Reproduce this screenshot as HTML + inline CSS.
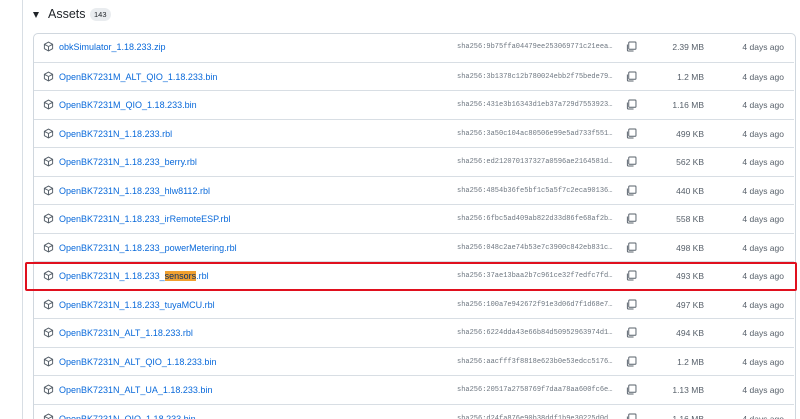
<!DOCTYPE html>
<html><head><meta charset="utf-8"><style>
html,body{margin:0;width:800px;height:419px;overflow:hidden}
body{background:#fff;font-family:"Liberation Sans",sans-serif;position:relative}
.vl{position:absolute;left:22px;top:0;width:1px;height:419px;background:#d8dee4}
.tri{position:absolute;left:33px;top:12px;width:0;height:0;border-left:3.5px solid transparent;border-right:3.5px solid transparent;border-top:6px solid #1f2328}
.ttl{position:absolute;left:48px;top:7px;font-size:12.5px;color:#1f2328}
.badge{position:absolute;left:90px;top:8px;height:13px;padding:0 4px;border-radius:7px;background:#e9ecef;font-size:7.5px;line-height:13px;color:#1f2328}
.box{position:absolute;left:33px;top:33px;width:761px;height:400px;border:1px solid #d0d7de;border-radius:5px}
.row{position:absolute;left:34px;width:760px;height:28px;border-top:1px solid #d8dee4}
.row svg.pk{position:absolute;left:9px;top:8px}
.nm{position:absolute;left:25px;top:9px;font-size:9px;color:#0969da;white-space:nowrap}
.hl{background:#f0a030;color:#0a3069}
.sh{position:absolute;left:423px;top:10px;font-family:"Liberation Mono",monospace;font-size:7px;color:#6e7781;white-space:nowrap}
.cp{position:absolute;left:592px;top:8px}
.sz{position:absolute;right:90px;top:9px;font-size:8.5px;color:#57606a}
.dt{position:absolute;right:10px;top:9px;font-size:8.5px;color:#57606a}
.red{position:absolute;left:25px;top:262px;width:768px;height:25px;border:2px solid #e0101e;border-radius:2px}
</style></head><body>
<div class="vl"></div>
<div class="tri"></div><div class="ttl">Assets</div><div class="badge">143</div>
<div class="box"></div>
<div id="rows"></div>
<div class="red"></div>
<script>
var d=[["obkSimulator_1.18.233.zip","9b75ffa04479ee253069771c21eea","2.39 MB"],
["OpenBK7231M_ALT_QIO_1.18.233.bin","3b1378c12b780024ebb2f75bede79","1.2 MB"],
["OpenBK7231M_QIO_1.18.233.bin","431e3b16343d1eb37a729d7553923","1.16 MB"],
["OpenBK7231N_1.18.233.rbl","3a50c104ac80506e99e5ad733f551","499 KB"],
["OpenBK7231N_1.18.233_berry.rbl","ed212070137327a0596ae2164581d","562 KB"],
["OpenBK7231N_1.18.233_hlw8112.rbl","4854b36fe5bf1c5a5f7c2eca90136","440 KB"],
["OpenBK7231N_1.18.233_irRemoteESP.rbl","6fbc5ad409ab822d33d86fe68af2b","558 KB"],
["OpenBK7231N_1.18.233_powerMetering.rbl","048c2ae74b53e7c3900c842eb831c","498 KB"],
["OpenBK7231N_1.18.233_<span class='hl'>sensors</span>.rbl","37ae13baa2b7c961ce32f7edfc7fd","493 KB"],
["OpenBK7231N_1.18.233_tuyaMCU.rbl","100a7e942672f91e3d06d7f1d68e7","497 KB"],
["OpenBK7231N_ALT_1.18.233.rbl","6224dda43e66b84d50952963974d1","494 KB"],
["OpenBK7231N_ALT_QIO_1.18.233.bin","aacfff3f8818e623b0e53edcc5176","1.2 MB"],
["OpenBK7231N_ALT_UA_1.18.233.bin","20517a2758769f7daa78aa600fc6e","1.13 MB"],
["OpenBK7231N_QIO_1.18.233.bin","d24fa876e90b38ddf1b9e30225d0d","1.16 MB"]];
var ic='<svg class="pk" width="11" height="11" viewBox="0 0 16 16"><path d="M8 1.5 L14 4.8 V11.2 L8 14.5 L2 11.2 V4.8 Z M2 4.8 L8 8 L14 4.8 M8 8 V14.5" fill="none" stroke="#57606a" stroke-width="1.4" stroke-linejoin="round"/></svg>';
var cp='<svg class="cp" width="11" height="11" viewBox="0 0 16 16"><path d="M5 1.5h8.5a1 1 0 0 1 1 1V11a1 1 0 0 1-1 1H5a1 1 0 0 1-1-1V2.5a1 1 0 0 1 1-1z M2 5v8.5a1 1 0 0 0 1 1h8" fill="none" stroke="#57606a" stroke-width="1.4"/></svg>';
var h='';
d.forEach(function(r,i){var t=33+28.5*i;h+='<div class="row" style="top:'+t+'px;'+(i==0?'border-top:none':'')+'">'+ic+'<div class="nm">'+r[0]+'</div><div class="sh">sha256:'+r[1]+'…</div>'+cp+'<div class="sz">'+r[2]+'</div><div class="dt">4 days ago</div></div>';});
document.getElementById('rows').innerHTML=h;
</script>
</body></html>
